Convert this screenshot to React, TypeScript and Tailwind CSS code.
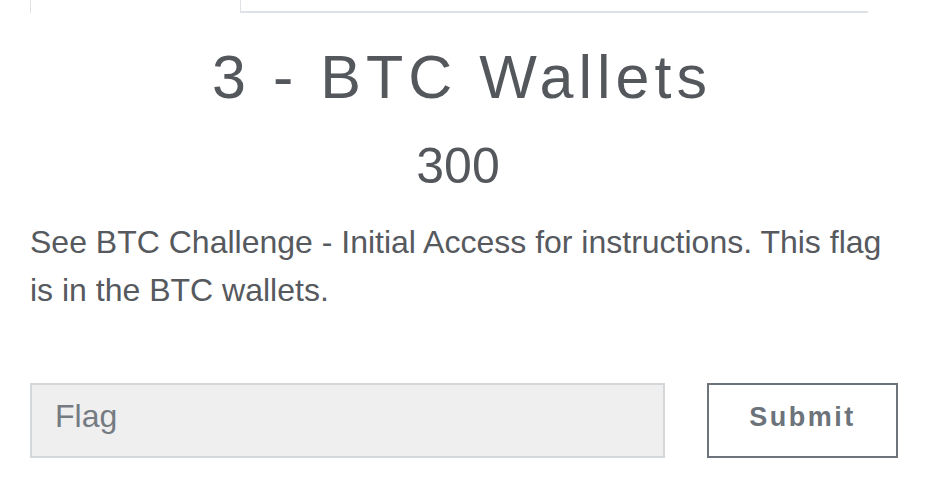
import React from "react";

export default function App() {
  return (
    <div
      className="w-[928px] h-[481px] bg-white overflow-hidden"
      style={{ fontFamily: '"Liberation Sans", Arial, Helvetica, sans-serif' }}
    >
      <div className="px-[30px] w-[928px]">
        {/* tabs */}
        <div className="flex w-[838px] h-[13px]">
          <div className="w-[211px] h-[13px] border-l border-r border-[#dee2e6]" />
          <div className="flex-1 h-[13px] border-b-2 border-[#dee2e6]" />
        </div>

        <h1 className="mt-[28px] pr-[4px] text-center text-[61px] leading-[1.2] tracking-[5px] text-[#54585d] font-normal">
          3 - BTC Wallets
        </h1>
        <h2 className="mt-[22px] pr-[12px] text-center text-[50px] leading-[1.2] text-[#54585d] font-normal">
          300
        </h2>
        <p className="mt-[22px] text-[32px] leading-[48px] text-[#56595e]">
          See BTC Challenge - Initial Access for instructions. This flag is in the BTC wallets.
        </p>

        <div className="mt-[69px] flex items-start">
          <input
            type="text"
            placeholder="Flag"
            className="w-[635px] h-[75px] bg-[#efefef] border-2 border-[#d5d8db] pl-[23px] pt-0 pb-[8px] text-[32px] text-[#495057] placeholder:text-[#757b82] outline-none"
            style={{ fontFamily: '"Liberation Sans", Arial, Helvetica, sans-serif' }}
          />
          <button
            className="ml-[42px] w-[191px] h-[75px] border-2 border-[#6c737a] bg-white text-[27px] font-bold tracking-[2.5px] text-[#6c737a] pb-[6px]"
            style={{ fontFamily: '"Liberation Sans", Arial, Helvetica, sans-serif' }}
          >
            Submit
          </button>
        </div>
      </div>
    </div>
  );
}
